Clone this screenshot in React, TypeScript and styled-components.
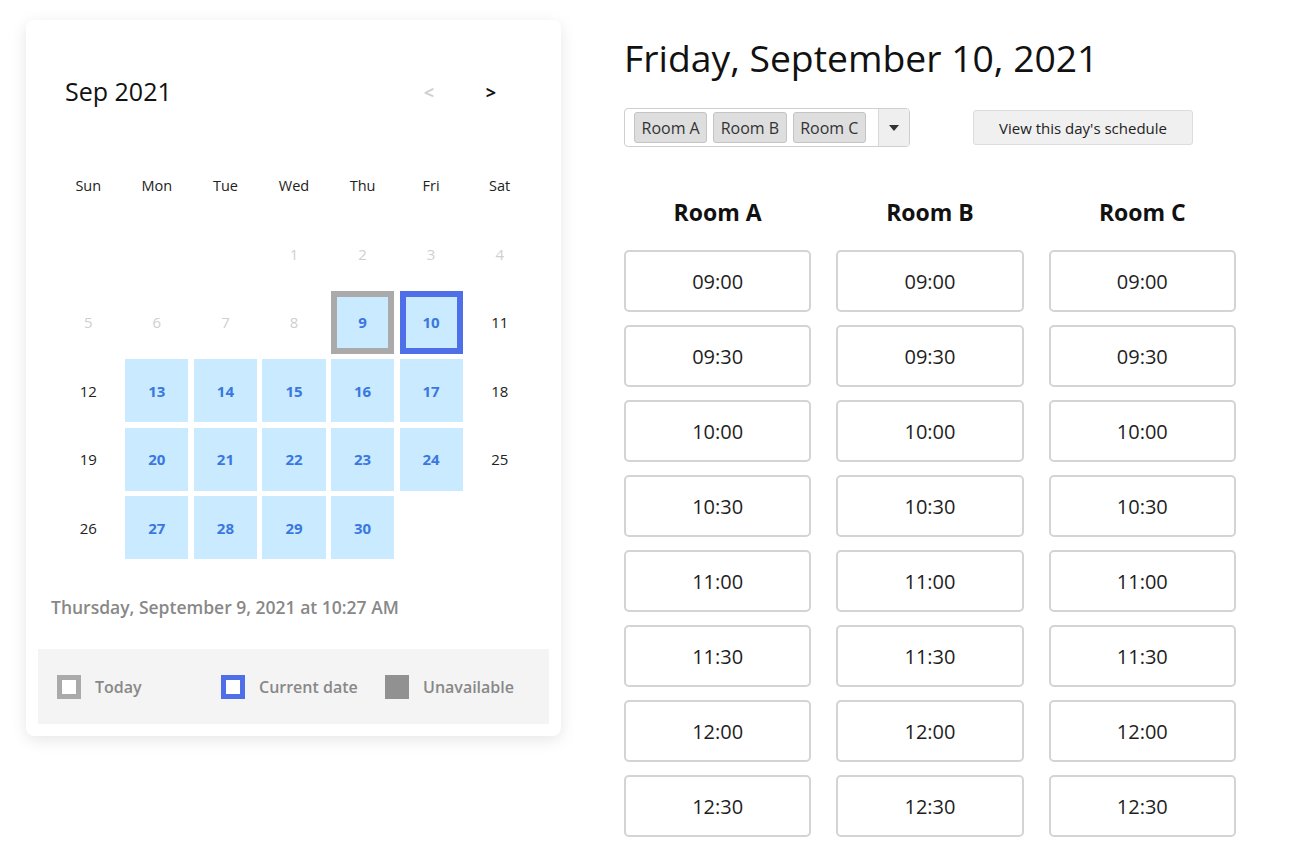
import React from "react";
import styled, { createGlobalStyle, css } from "styled-components";

const Global = createGlobalStyle`
  html, body { margin: 0; padding: 0; background: #fff; }
  body { font-family: "Open Sans", "Noto Sans", Arial, sans-serif; color: #111; }
  * { box-sizing: border-box; }
`;

const Page = styled.div`
  display: flex;
  align-items: flex-start;
  gap: 63px;
  padding: 20px 0 0 26px;
`;

const Card = styled.div`
  width: 535px;
  background: #fff;
  border-radius: 8px;
  box-shadow: 0 4px 16px rgba(0, 0, 0, 0.1);
  padding: 0 12px 12px;
  display: flex;
  flex-direction: column;
`;

const CalHeader = styled.div`
  height: 119px;
  margin-top: 12px;
  display: flex;
  align-items: center;
  padding-left: 27px;
`;

const MonthLabel = styled.div`
  font-size: 25px;
  color: #111;
  flex: 1;
  margin-top: -2px;
`;

const NavBtn = styled.span<{ $disabled?: boolean }>`
  width: 62px;
  text-align: center;
  font-size: 18px;
  font-weight: 700;
  color: ${(p) => (p.$disabled ? "#d0d0d0" : "#111")};
  &:last-child { margin-right: 27px; }
`;

const Grid = styled.div`
  margin: 0 16px;
  width: 480px;
  display: grid;
  grid-template-columns: repeat(7, 1fr);
  grid-auto-rows: 68.5px;
`;

const WeekDay = styled.div`
  display: flex;
  align-items: center;
  justify-content: center;
  font-size: 14.5px;
  color: #222;
`;

type DayKind = "empty" | "past" | "normal" | "avail";

const Day = styled.div<{ $kind: DayKind; $mark?: "today" | "current" }>`
  margin: 2.75px;
  display: flex;
  align-items: center;
  justify-content: center;
  font-size: 15px;
  color: #222;
  ${(p) =>
    p.$kind === "past" &&
    css`
      color: #cfcfcf;
    `}
  ${(p) =>
    p.$kind === "avail" &&
    css`
      background: #c9eaff;
      color: #3a78e0;
      font-weight: 700;
    `}
  ${(p) =>
    p.$mark === "today" &&
    css`
      border: 6px solid #aaaaaa;
    `}
  ${(p) =>
    p.$mark === "current" &&
    css`
      border: 6px solid #4f6fe9;
    `}
`;

const NowText = styled.div`
  margin-top: 34px;
  padding-left: 13px;
  font-size: 17.5px;
  font-weight: 600;
  color: #888;
  line-height: 22px;
`;

const Legend = styled.div`
  margin-top: 31px;
  height: 75px;
  background: #f4f4f4;
  display: flex;
  align-items: center;
  padding-left: 19px;
`;

const LegendItem = styled.div`
  width: 164px;
  display: flex;
  align-items: center;
  gap: 14px;
  font-size: 16px;
  font-weight: 600;
  color: #888;
`;

const Swatch = styled.span<{ $kind: "today" | "current" | "unavailable" }>`
  width: 24px;
  height: 24px;
  flex: none;
  ${(p) =>
    p.$kind === "today"
      ? css`
          border: 5px solid #aaaaaa;
          background: #fff;
        `
      : p.$kind === "current"
      ? css`
          border: 5px solid #4f6fe9;
          background: #fff;
        `
      : css`
          background: #919191;
        `}
`;

const Right = styled.div`
  display: flex;
  flex-direction: column;
  width: 612px;
`;

const Title = styled.h1`
  margin: 12px 0 0 0;
  font-size: 37.3px;
  font-weight: 400;
  line-height: 52px;
  color: #111;
`;

const Toolbar = styled.div`
  margin-top: 24px;
  display: flex;
  align-items: center;
  gap: 63px;
`;

const MultiSelect = styled.div`
  width: 286px;
  height: 39px;
  border: 1px solid #cfcfcf;
  border-radius: 4px;
  display: flex;
  align-items: stretch;
  overflow: hidden;
`;

const Chips = styled.div`
  flex: 1;
  display: flex;
  align-items: center;
  gap: 6px;
  padding-left: 9px;
`;

const Chip = styled.span`
  height: 31px;
  padding: 0 6.5px;
  display: flex;
  align-items: center;
  background: #dedede;
  border: 1px solid #c4c4c4;
  border-radius: 3px;
  font-size: 16px;
  color: #333;
`;

const Caret = styled.div`
  width: 31px;
  border-left: 1px solid #d8d8d8;
  background: #efefef;
  display: flex;
  align-items: center;
  justify-content: center;
`;

const ViewBtn = styled.button`
  width: 220px;
  height: 35px;
  background: #f0f0f0;
  border: 1px solid #dcdcdc;
  border-radius: 3px;
  font-family: inherit;
  font-size: 15px;
  color: #222;
  padding: 0;
`;

const Rooms = styled.div`
  margin-top: 50px;
  display: grid;
  grid-template-columns: repeat(3, 1fr);
  column-gap: 25px;
`;

const RoomCol = styled.div`
  display: flex;
  flex-direction: column;
  gap: 13px;
`;

const RoomName = styled.div`
  text-align: center;
  font-size: 23px;
  font-weight: 700;
  line-height: 30px;
  margin-bottom: 10px;
  color: #111;
`;

const Slot = styled.div`
  height: 62px;
  border: 2px solid #d4d4d4;
  border-radius: 5px;
  display: flex;
  align-items: center;
  justify-content: center;
  font-size: 20px;
  font-weight: 500;
  color: #1e1e1e;
`;

const weekdays = ["Sun", "Mon", "Tue", "Wed", "Thu", "Fri", "Sat"];
const times = ["09:00", "09:30", "10:00", "10:30", "11:00", "11:30", "12:00", "12:30"];

function dayKind(d: number): DayKind {
  if (d < 9) return "past";
  const dow = (d + 2) % 7; // Sep 1 2021 is a Wednesday
  if (dow === 0 || dow === 6) return "normal";
  return "avail";
}

export default function App() {
  const cells: React.ReactNode[] = [];
  for (let i = 0; i < 3; i++) cells.push(<Day key={`e${i}`} $kind="empty" />);
  for (let d = 1; d <= 30; d++) {
    const mark = d === 9 ? "today" : d === 10 ? "current" : undefined;
    cells.push(
      <Day key={d} $kind={dayKind(d)} $mark={mark}>
        {d}
      </Day>
    );
  }
  return (
    <>
      <Global />
      <Page>
        <Card>
          <CalHeader>
            <MonthLabel>Sep 2021</MonthLabel>
            <NavBtn $disabled>&lt;</NavBtn>
            <NavBtn>&gt;</NavBtn>
          </CalHeader>
          <Grid>
            {weekdays.map((w) => (
              <WeekDay key={w}>{w}</WeekDay>
            ))}
            {cells}
          </Grid>
          <NowText>Thursday, September 9, 2021 at 10:27 AM</NowText>
          <Legend>
            <LegendItem>
              <Swatch $kind="today" />
              Today
            </LegendItem>
            <LegendItem>
              <Swatch $kind="current" />
              Current date
            </LegendItem>
            <LegendItem>
              <Swatch $kind="unavailable" />
              Unavailable
            </LegendItem>
          </Legend>
        </Card>
        <Right>
          <Title>Friday, September 10, 2021</Title>
          <Toolbar>
            <MultiSelect>
              <Chips>
                <Chip>Room A</Chip>
                <Chip>Room B</Chip>
                <Chip>Room C</Chip>
              </Chips>
              <Caret>
                <svg width="10" height="6" viewBox="0 0 10 6">
                  <path d="M0 0 L10 0 L5 6 Z" fill="#333" />
                </svg>
              </Caret>
            </MultiSelect>
            <ViewBtn>View this day's schedule</ViewBtn>
          </Toolbar>
          <Rooms>
            {["Room A", "Room B", "Room C"].map((r) => (
              <RoomCol key={r}>
                <RoomName>{r}</RoomName>
                {times.map((t) => (
                  <Slot key={t}>{t}</Slot>
                ))}
              </RoomCol>
            ))}
          </Rooms>
        </Right>
      </Page>
    </>
  );
}
